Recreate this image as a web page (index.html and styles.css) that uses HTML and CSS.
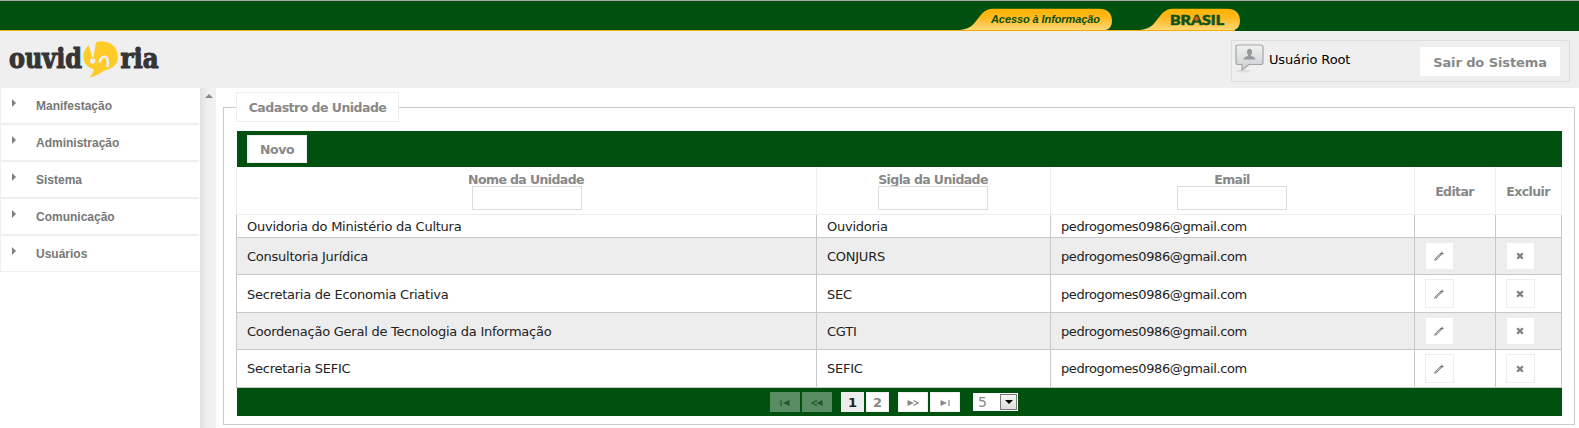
FILE: index.html
```
<!DOCTYPE html>
<html lang="pt-BR">
<head>
<meta charset="utf-8">
<title>Ouvidoria - Cadastro de Unidade</title>
<link rel="stylesheet" href="styles.css">
</head>
<body>
<svg class="defs" width="0" height="0" aria-hidden="true">
  <defs>
    <linearGradient id="gold" x1="0" y1="0" x2="0" y2="1"><stop offset="0" stop-color="#ffb300"/><stop offset=".4" stop-color="#ffb81c"/><stop offset="1" stop-color="#ffd777"/></linearGradient>
    <linearGradient id="silver" x1="0" y1="0" x2="0" y2="1"><stop offset="0" stop-color="#f0f2f3"/><stop offset="1" stop-color="#c9cdcf"/></linearGradient>
    <symbol id="pencil" viewBox="0 0 10 10"><path d="M1.500 8.500L7 3" stroke="#808080" stroke-width="2.200"/><path d="M2.200 7.800L6.600 3.400" stroke="#ddd" stroke-width=".8"/><path d="M6 2.500h3.500M8 .7v3.300" stroke="#777" stroke-width="1.100"/><path d="M.3 9.700l.4-2 1.600 1.600z" fill="#777"/></symbol>
    <symbol id="cross" viewBox="0 0 8 8"><path d="M1.200 1.200l5.600 5.600M6.800 1.200l-5.600 5.600" stroke="#808080" stroke-width="2.300"/></symbol>
  </defs>
</svg>
<div class="govbar">
  <svg class="tab" width="153" height="23" viewBox="0 0 153 23"><path d="M0 22C12 21 15 14 20 8Q25 1 32 .8H139C149 .8 152 7 152 13Q152 20 146 22z" fill="url(#gold)"/><text x="31" y="15.300" textLength="109" class="tab-text">Acesso à Informação</text></svg>
  <svg class="tab" width="101" height="23" viewBox="0 0 101 23"><path d="M0 22C12 21 15 14 20 8Q25 1 32 .8H87C97 .8 100 7 100 13Q100 20 94 22z" fill="url(#gold)"/><text x="30" y="16.800" textLength="54" lengthAdjust="spacingAndGlyphs" class="brasil">BRASIL</text><path d="M54 10.500l2.500-2.500 2.500 2-1.500 3-2.500-.5z" fill="#d65a1c"/></svg>
</div>
<header class="header">
  <svg class="logo" width="170" height="44" viewBox="0 0 170 44">
    <text x="9" y="29.500" textLength="73" lengthAdjust="spacingAndGlyphs" class="logo-text">ouvid</text>
    <path d="M89 7.300Q82 13 83.500 21Q85.500 29.500 94 31Q93.500 35 89.500 39.500Q99 37 104 32.500Q117.500 30 117.800 19Q117.500 5 103 3.400Q99 3 96 4.500L93.500 19H91.800Z" fill="#ffcb27"/>
    <circle cx="92.700" cy="23" r="2.700" fill="#efefef"/>
    <path d="M99.500 24.500Q101 18.500 105 18.800Q109 19.500 107.300 29" fill="none" stroke="#efefef" stroke-width="2.600"/>
    <text x="120.500" y="29.500" textLength="38" lengthAdjust="spacingAndGlyphs" class="logo-text">ria</text>
  </svg>
  <div class="user">
    <svg width="30" height="32" viewBox="0 0 30 32"><ellipse cx="8" cy="27" rx="7" ry="1.500" fill="#dcdcdc"/><path d="M3 1H26Q28 1 28 3V18Q28 20.500 26 20.500H14L7 26V20.500H3Q1 20.500 1 18V3Q1 1 3 1z" fill="url(#silver)" stroke="#a4a4a4" stroke-width="1.200"/><ellipse cx="14.500" cy="8" rx="2.500" ry="3.200" fill="#999"/><path d="M8.500 15.500Q9 12.500 13 12V10H16V12Q20 12.500 20.500 15.500z" fill="#999"/></svg>
    <span class="user-name">Usuário Root</span>
    <button class="logout">Sair do Sistema</button>
  </div>
</header>
<div class="body">
  <nav class="menu">
    <a class="item"><i class="arrow"></i>Manifestação</a>
    <a class="item"><i class="arrow"></i>Administração</a>
    <a class="item"><i class="arrow"></i>Sistema</a>
    <a class="item"><i class="arrow"></i>Comunicação</a>
    <a class="item"><i class="arrow"></i>Usuários</a>
  </nav>
  <div class="gutter"><i class="up"></i></div>
  <main class="content">
    <section class="panel">
      <h1 class="legend">Cadastro de Unidade</h1>
      <div class="toolbar"><button class="new">Novo</button></div>
      <div class="row head">
        <div><span>Nome da Unidade</span><input class="filter"></div>
        <div><span>Sigla da Unidade</span><input class="filter"></div>
        <div><span>Email</span><input class="filter"></div>
        <div><span>Editar</span></div>
        <div><span>Excluir</span></div>
      </div>
      <div class="row first"><div>Ouvidoria do Ministério da Cultura</div><div>Ouvidoria</div><div class="mail">pedrogomes0986@gmail.com</div><div></div><div></div></div>
      <div class="row odd"><div>Consultoria Jurídica</div><div>CONJURS</div><div class="mail">pedrogomes0986@gmail.com</div><div><button class="act"><svg width="10" height="10"><use href="#pencil"/></svg></button></div><div><button class="act"><svg width="8" height="8"><use href="#cross"/></svg></button></div></div>
      <div class="row even"><div>Secretaria de Economia Criativa</div><div>SEC</div><div class="mail">pedrogomes0986@gmail.com</div><div><button class="act"><svg width="10" height="10"><use href="#pencil"/></svg></button></div><div><button class="act"><svg width="8" height="8"><use href="#cross"/></svg></button></div></div>
      <div class="row odd"><div>Coordenação Geral de Tecnologia da Informação</div><div>CGTI</div><div class="mail">pedrogomes0986@gmail.com</div><div><button class="act"><svg width="10" height="10"><use href="#pencil"/></svg></button></div><div><button class="act"><svg width="8" height="8"><use href="#cross"/></svg></button></div></div>
      <div class="row"><div>Secretaria SEFIC</div><div>SEFIC</div><div class="mail">pedrogomes0986@gmail.com</div><div><button class="act"><svg width="10" height="10"><use href="#pencil"/></svg></button></div><div><button class="act"><svg width="8" height="8"><use href="#cross"/></svg></button></div></div>
      <div class="pager">
        <button class="nav off"><svg width="10" height="6"><path d="M1 0v6" stroke="#1f5a2a" stroke-width="1.200"/><path d="M9.500 0v6L3 3z" fill="#1f5a2a"/></svg></button>
        <button class="nav off"><svg width="12" height="6"><path d="M6 .5L1 3l5 2.500" fill="none" stroke="#1f5a2a" stroke-width="1.200"/><path d="M11.500 0v6L5.500 3z" fill="#1f5a2a"/></svg></button>
        <button class="page current">1</button>
        <button class="page">2</button>
        <button class="nav next"><svg width="12" height="6"><path d="M.5 0v6L7 3z" fill="#888"/><path d="M6.500 .5L11 3l-4.500 2.500" fill="none" stroke="#888" stroke-width="1.200"/></svg></button>
        <button class="nav"><svg width="10" height="6"><path d="M.5 0v6L7 3z" fill="#888"/><path d="M9 0v6" stroke="#888" stroke-width="1.200"/></svg></button>
        <div class="size"><span>5</span><b class="drop"><svg width="8" height="4"><path d="M0 0h8L4 4z"/></svg></b></div>
      </div>
    </section>
  </main>
</div>
</body>
</html>
```
FILE: styles.css
```
* { box-sizing: border-box; }
body { margin: 0; height: 428px; overflow: hidden; background: #fff; font: 13px "DejaVu Sans", Verdana, sans-serif; color: #222; }
.defs { position: absolute; }
button { font: inherit; margin: 0; padding: 0; border: 1px solid #eee; background: #fff; color: #888; font-weight: bold; display: flex; align-items: center; justify-content: center; }

.govbar { height: 31px; background: linear-gradient(90deg, #f2ae00 1235px, #00500f 1235px) 0 29px / 100% 1px no-repeat #00500f; border-top: 1px solid #aaa; display: flex; gap: 27px; padding: 7px 0 0 960px; }
.tab-text { font: italic bold 11px "Liberation Sans", Arial, sans-serif; fill: #0a4d10; }
.brasil { font: 900 14px Lato, sans-serif; fill: #10531a; stroke: #10531a; stroke-width: .6px; }

.header { height: 57px; background: #efefef; display: flex; justify-content: space-between; padding-right: 9px; }
.logo { margin-top: 7px; }
.logo-text { font: bold 28px "DejaVu Serif", serif; fill: #373435; stroke: #373435; stroke-width: 1.2px; }
.user { width: 339px; height: 42px; margin-top: 9px; border: 1px solid #ddd; display: flex; align-items: flex-start; padding: 3px 9px 0 3px; }
.user-name { margin: 8px 0 0 4px; color: #000; line-height: 16px; letter-spacing: -.15px; }
.logout { width: 140px; height: 29px; margin: 3px 0 0 auto; padding-top: 2px; border-color: #fff; letter-spacing: -.1px; }

.body { display: flex; height: 340px; }
.menu { width: 200px; padding: 0 1px; background: linear-gradient(#efefef, #efefef) 0 0 / 1px 184px no-repeat; }
.item { height: 37px; display: flex; align-items: center; padding: 1px 0 0 11px; border-bottom: 2px solid #efefef; font: bold 12px "Liberation Sans", Arial, sans-serif; color: #777; }
.item:last-child { height: 36px; border-bottom-width: 1px; }
.arrow { border: 4px solid transparent; border-left-color: #808080; border-right: 0; margin: -7px 20px 0 0; }
.gutter { width: 16px; background: linear-gradient(90deg, #e2e2e2, #efefef 8px, #f1f1f1); padding: 6px 0 0 5px; }
.up { display: block; width: 8px; border: 4px solid transparent; border-bottom-color: #888; border-top: 0; }
.content { flex: 1; padding: 19px 4px 0 7px; }
.panel { height: 318px; border: 1px solid #ccc; padding: 0 12px; }
.legend { width: 163px; height: 30px; margin: -16px 0 9px; padding-top: 1px; border: 1px solid #eee; background: #fff; color: #888; font-size: 12.5px; letter-spacing: -.52px; line-height: 28px; text-align: center; }
.toolbar { height: 36px; margin-left: 1px; background: #00500f; padding: 4px 0 0 10px; }
.new { width: 60px; height: 28px; padding-top: 1px; font-size: 12.5px; letter-spacing: -.4px; }

.row { display: grid; grid-template-columns: 580px 234px 364px 81px 66px; height: 38px; border-left: 1px solid #c8c8c8; width: 1326px; letter-spacing: -.25px; }
.row > div { border-right: 1px solid #c8c8c8; border-bottom: 1px solid #c8c8c8; padding-left: 10px; display: flex; align-items: center; white-space: nowrap; }
.row .mail { letter-spacing: -.39px; }
.row.even > div:nth-child(-n+3) { padding-top: 2px; }
.row.first { height: 23px; }
.row.odd { height: 37px; background: #ededed; }
.row.head { height: 48px; border-color: #eee; font-size: 12.5px; font-weight: bold; color: #888; letter-spacing: -.6px; }
.row.head > div { flex-direction: column; justify-content: center; padding: 0 1px 0 0; border-color: #eee; line-height: 15px; }
.row.head > div:nth-child(n+4) { padding-top: 2px; }
.filter { width: 110px; height: 24px; border: 1px solid #ddd; padding: 0; }
.head > div:first-child .filter { margin-left: 1px; }
.head > div:nth-child(-n+3) span { padding-top: 1px; margin-bottom: -1px; }
.act { width: 29px; height: 29px; padding-right: 1px; }
.odd .act { height: 28px; }

.pager { height: 28px; margin-left: 1px; background: #00500f; display: flex; align-items: flex-start; padding: 4px 0 0 533px; gap: 2px; }
.nav { width: 30px; height: 20px; padding-top: 2px; }
.off { background: #598c63; border-color: #598c63; }
.page { width: 23px; height: 20px; }
.current { margin-left: 7px; background: #ededed; color: #222; }
.next { margin-left: 7px; }
.size { width: 45px; height: 18px; margin: 1px 0 0 11px; background: #fff; display: flex; align-items: center; justify-content: space-between; padding: 0 1px 0 5px; color: #888; font-size: 14px; }
.drop { width: 17px; height: 16px; border: 1px solid #777; background: linear-gradient(#f4f4f4, #ddd); display: flex; align-items: center; justify-content: center; }
```
